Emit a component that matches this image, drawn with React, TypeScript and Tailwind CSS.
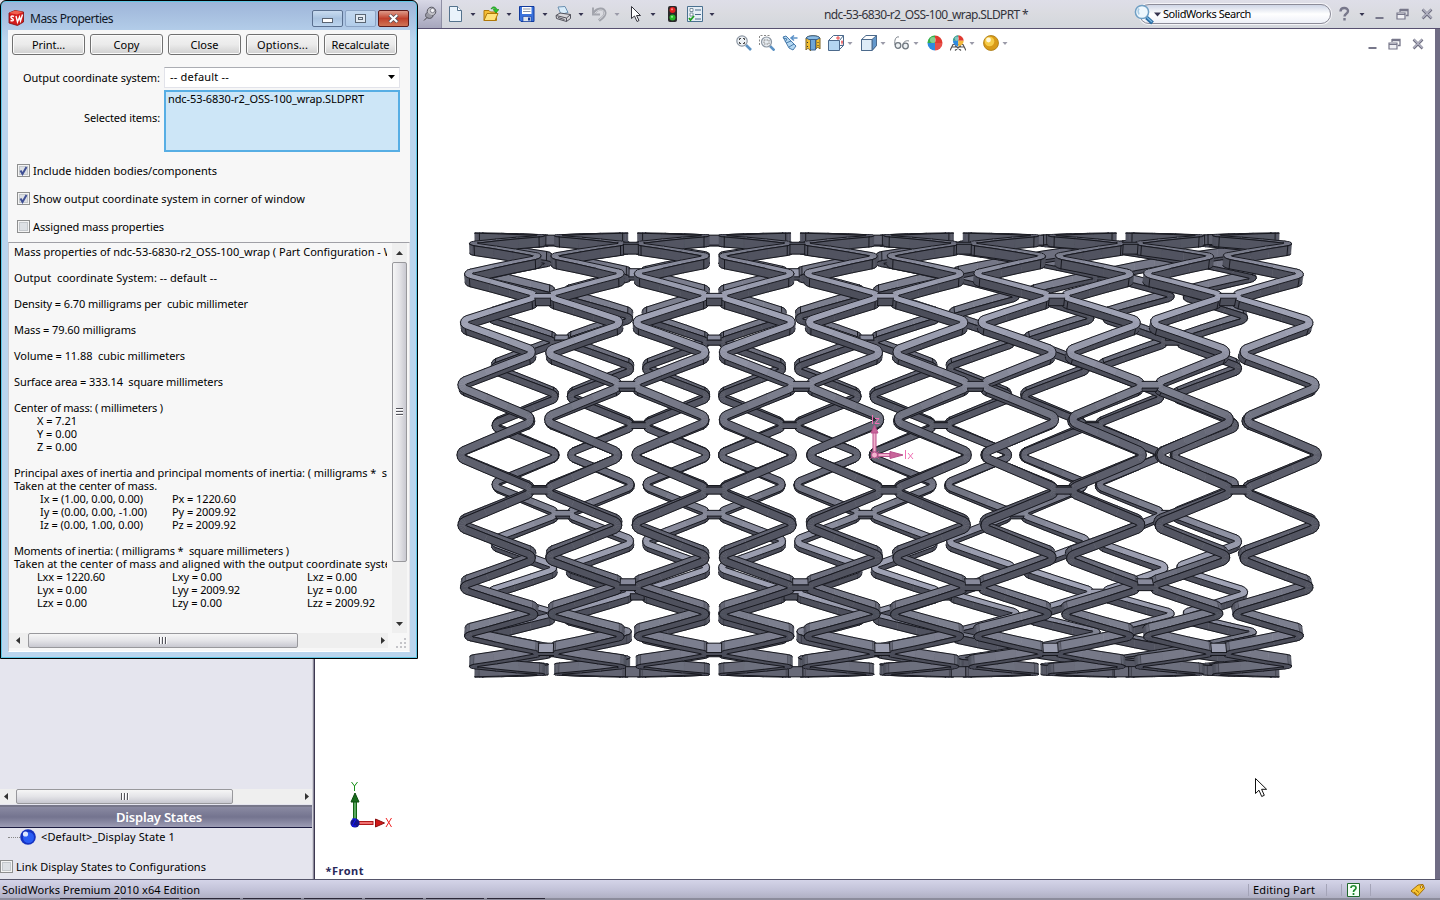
import { useLayoutEffect, useMemo, useRef, useState } from "react";
import type { ReactNode } from "react";

/* ---------- text that is spaced to a given width ---------- */
function Fit({ w, children, className = "" }: { w: number; children: string; className?: string }) {
  const ref = useRef<HTMLSpanElement>(null);
  const [ls, setLs] = useState(0);
  useLayoutEffect(() => {
    const el = ref.current;
    if (el) setLs((w - el.getBoundingClientRect().width) / children.length);
  }, [w, children]);
  return (
    <span ref={ref} className={`inline-block whitespace-pre ${className}`} style={{ letterSpacing: `${ls}px` }}>
      {children}
    </span>
  );
}

/* ---------- stent geometry ---------- */
type P2 = [number, number];
type P3 = [number, number, number];
type Face = { z: number; fill: string; d: string; e: string };

const R_OUT = 0.553;
const R_IN = 0.528;
const APEXES = 42;
const STEP = (2 * Math.PI) / APEXES;
const PITCH = 0.2023;
const HALF = 0.0095;
const FILLET = 0.0112;
const AMP = 0.0967;

const wrap = (u: number, v: number, r: number): P3 => {
  const t = v / R_OUT;
  return [u, r * Math.sin(t), r * Math.cos(t)];
};

const project = ([x, y, z]: P3): P2 => {
  const s = 1 / (0.00250015 - 0.000188 * (z / R_OUT));
  return [714 + s * (0.405 + x), 455 + s * y];
};

const mix = (t: number) => {
  const a = [76, 78, 90];
  const b = [168, 171, 190];
  return `rgb(${a.map((c, i) => Math.round(c + (b[i] - c) * t)).join(",")})`;
};

function addFace(out: Face[], q: P3[], edges: number[][], bias = 0) {
  const p = q.map(project);
  let area = 0;
  for (let i = 0; i < 4; i++) {
    const n = p[(i + 1) % 4];
    area += p[i][0] * n[1] - n[0] * p[i][1];
  }
  if (area <= 0) return;
  const a = [0, 1, 2].map((i) => q[2][i] - q[0][i]);
  const b = [0, 1, 2].map((i) => q[3][i] - q[1][i]);
  const n = [a[1] * b[2] - a[2] * b[1], a[2] * b[0] - a[0] * b[2], a[0] * b[1] - a[1] * b[0]];
  const len = Math.hypot(n[0], n[1], n[2]) || 1;
  const lit = Math.max(0, (-0.62 * n[1] + 0.785 * n[2]) / len);
  const f = (c: P2) => `${c[0].toFixed(1)} ${c[1].toFixed(1)}`;
  out.push({
    z: (q[0][2] + q[1][2] + q[2][2] + q[3][2]) / 4 + bias,
    fill: mix(0.14 * lit + 0.76 * Math.pow(lit, 8)),
    d: `M${p.map(f).join("L")}Z`,
    e: edges.map(([i, j]) => `M${f(p[i])}L${f(p[j])}`).join(""),
  });
}

function buildStent(): Face[] {
  const out: Face[] = [];
  const step = STEP * R_OUT;
  const g = Math.atan(step / (2 * AMP));
  const sweep = Math.PI / 2 - g;
  for (let ring = 0; ring < 10; ring++) {
    const c = -0.9104 + PITCH * ring;
    const pts: { a: P2; b: P2; mark: boolean }[] = [];
    for (let k = 0; k < APEXES; k++) {
      const left = (k + ring) % 2 === 0;
      const dir = left ? -1 : 1;
      const cu = c + dir * (AMP - FILLET / Math.sin(g));
      const at = (phi: number, r: number): P2 => [cu + dir * r * Math.cos(phi), k * step + r * Math.sin(phi)];
      for (let m = 0; m <= 6; m++) {
        const phi = -sweep + (2 * sweep * m) / 6;
        const o = at(phi, FILLET + HALF);
        const i = at(phi, FILLET - HALF);
        pts.push({ a: left ? o : i, b: left ? i : o, mark: m === 0 || m === 6 });
      }
    }
    const n = pts.length;
    for (let j = 0; j < n; j++) {
      const s = pts[j];
      const t0 = pts[(j + 1) % n];
      const add = j === n - 1 ? APEXES * step : 0;
      const ta: P2 = [t0.a[0], t0.a[1] + add];
      const tb: P2 = [t0.b[0], t0.b[1] + add];
      const parts = s.mark && t0.mark ? 3 : 1;
      const lerp = (p: P2, q: P2, f: number): P2 => [p[0] + (q[0] - p[0]) * f, p[1] + (q[1] - p[1]) * f];
      for (let h = 0; h < parts; h++) {
        const a0 = lerp(s.a, ta, h / parts);
        const a1 = lerp(s.a, ta, (h + 1) / parts);
        const b0 = lerp(s.b, tb, h / parts);
        const b1 = lerp(s.b, tb, (h + 1) / parts);
        const [a0o, a1o, b0o, b1o] = [a0, a1, b0, b1].map((p) => wrap(p[0], p[1], R_OUT));
        const [a0i, a1i, b0i, b1i] = [a0, a1, b0, b1].map((p) => wrap(p[0], p[1], R_IN));
        const tick = s.mark && h === 0;
        addFace(out, [a0o, b0o, b1o, a1o], [[0, 3], [1, 2]]);
        addFace(out, [a0i, a1i, b1i, b0i], [[0, 1], [2, 3]]);
        addFace(out, [a0i, a0o, a1o, a1i], tick ? [[1, 2], [0, 3], [0, 1]] : [[1, 2], [0, 3]]);
        addFace(out, [b0o, b0i, b1i, b1o], tick ? [[1, 2], [0, 3], [0, 1]] : [[1, 2], [0, 3]]);
      }
    }
    if (ring < 9) {
      const u = c + PITCH / 2;
      const hu = 0.018;
      const hv = 0.0082;
      for (let k = ring % 2 === 0 ? 1 : 4; k < APEXES; k += 6) {
        const v = k * step;
        const corner = (du: number, dv: number, r: number) => wrap(u + du, v + dv, r);
        const o = [corner(-hu, -hv, R_OUT), corner(hu, -hv, R_OUT), corner(hu, hv, R_OUT), corner(-hu, hv, R_OUT)];
        const i = [corner(-hu, -hv, R_IN), corner(hu, -hv, R_IN), corner(hu, hv, R_IN), corner(-hu, hv, R_IN)];
        addFace(out, o, [[0, 1], [2, 3]], 0.012);
        addFace(out, [i[0], i[3], i[2], i[1]], [[0, 3], [1, 2]], 0.012);
        addFace(out, [i[0], i[1], o[1], o[0]], [[0, 1], [2, 3], [0, 3], [1, 2]], 0.012);
        addFace(out, [o[3], o[2], i[2], i[3]], [[0, 1], [2, 3], [0, 3], [1, 2]], 0.012);
      }
    }
  }
  return out.sort((a, b) => a.z - b.z);
}

function Viewport() {
  const faces = useMemo(buildStent, []);
  return (
    <svg className="block h-full w-full" viewBox="315 29 1120 850">
      {faces.map((f, i) => (
        <g key={i}>
          <path d={f.d} fill={f.fill} stroke={f.fill} strokeWidth="0.6" strokeLinejoin="round" />
          <path d={f.e} stroke="#14151b" strokeWidth="0.95" fill="none" strokeLinecap="round" />
        </g>
      ))}
      {/* principal axes at the centre of mass */}
      <g stroke="#b8518c" strokeWidth="1">
        <rect x="873" y="432" width="3" height="20" fill="#f0b0cc" />
        <path d="M874.5 425l3.500 8h-7z" fill="#c8649a" />
        <rect x="878" y="453.500" width="12" height="3" fill="#f0b0cc" />
        <path d="M903 455l-13 -3.500v7z" fill="#c8649a" />
        <circle cx="874.500" cy="455" r="3" fill="#f3b4d0" />
        <path d="M870 451l2 2M879 451l-2 2M870 459l2 -2M879 459l-2 -2" />
        <g stroke="#f070b4" fill="none">
          <path d="M872.500 415v9M875 418.500h4l-4 5h4.500" />
          <path d="M905.500 450v9M908 453l5 6M913 453l-5 6" />
        </g>
      </g>
      {/* view triad */}
      <g>
        <rect x="353.500" y="800" width="3" height="20" fill="#5aa860" stroke="#146414" />
        <path d="M355 793l4 9h-8z" fill="#176b1c" stroke="#0e4a10" />
        <rect x="358" y="821.500" width="15" height="3" fill="#f07070" stroke="#b01818" />
        <path d="M384.500 823l-9 -4v8z" fill="#d01818" stroke="#8a1010" />
        <circle cx="355" cy="823" r="4.600" fill="#14148c" />
        <path d="M352 819h4l-4 7h4" fill="none" stroke="#1414ff" />
        <path d="M351.500 782l3 4v5M357.500 782l-3 4" fill="none" stroke="#189018" />
        <path d="M386 818l5.500 9M391.500 818l-5.500 9" fill="none" stroke="#f02020" />
      </g>
      <text x="325.500" y="875" fill="#28285a" fontFamily="Noto Sans, sans-serif" fontWeight="700" fontSize="11" textLength="38">
        *Front
      </text>
      {/* pointer */}
      <path d="M1255.500 778.500v15l3.500 -3.300l2.700 6.300l2.600 -1.200l-2.700 -6h5z" fill="#fff" stroke="#111" />
    </svg>
  );
}

/* ---------- small parts ---------- */
const Arrow = ({ dim = false }: { dim?: boolean }) => (
  <svg className="h-[5px] w-[6px] shrink-0" viewBox="0 0 6 5">
    <path d="M.5 1h5L3 4z" fill={dim ? "#9a9aa8" : "#35334f"} />
  </svg>
);

function Ico({ children, className = "", w = 16 }: { children: ReactNode; className?: string; w?: number }) {
  return (
    <svg className={`h-4 shrink-0 ${className}`} width={w} height="16" viewBox={`0 0 ${w} 16`}>
      {children}
    </svg>
  );
}

const Tool = ({ children, dim }: { children: ReactNode; dim?: boolean }) => (
  <div className="flex w-9 shrink-0 items-center gap-[7px]">
    <Ico>{children}</Ico>
    <Arrow dim={dim} />
  </div>
);

const WinGlyphs = ({ gap }: { gap: string }) => (
  <div className={`flex items-center ${gap}`}>
    <Ico w={10}>
      <path d="M1.500 11h8v2h-8z" fill="#77778a" />
    </Ico>
    <Ico w={13}>
      <path d="M4 3.500h8v6h-2M4 3v3M4 4.500h8" fill="none" stroke="#77778a" strokeWidth="1.300" />
      <path d="M1 7h8v6h-8zM1 8.500h8" fill="#f0f0f4" stroke="#77778a" strokeWidth="1.200" />
    </Ico>
    <Ico w={12}>
      <path d="M1.500 3.500l9 9M10.500 3.500l-9 9" stroke="#6a6a7c" strokeWidth="2.500" />
      <path d="M2 3.500l8.500 8.500M10 3.500l-8.500 8.500" stroke="#b4b4c4" strokeWidth="1.200" />
    </Ico>
  </div>
);

function Header() {
  return (
    <header className="flex h-[29px] shrink-0 items-center border-b border-[#575070] bg-linear-to-b from-[#dedee8] via-[#dadbe0] to-[#d3d6dc] pl-[418px]">
      <div className="flex h-full w-6 shrink-0 items-center justify-center border-r border-[#8f8fa4] bg-linear-to-b from-[#d8d8e6] to-[#a6a6bc]">
        <Ico w={14}>
          <circle cx="8.500" cy="5.500" r="4.300" fill="#c4c4ca" stroke="#555560" />
          <circle cx="9.500" cy="4.500" r="2.200" fill="#f4f4f8" stroke="#70707c" strokeWidth=".8" />
          <path d="M4 6.500c-2 1.500-2 4.500.5 5.500s5 0 5.500-2" fill="#9a9aa4" stroke="#555560" />
          <path d="M4 11.500L1 14.500" stroke="#444" />
        </Ico>
      </div>
      <div className="flex items-center pl-[5px]">
        <Tool>
          <path d="M2.500.5h8l4 4v11h-12z" fill="#eaf3fb" stroke="#54728c" />
          <path d="M10.500.5v4h4" fill="#fff" stroke="#54728c" />
        </Tool>
        <Tool>
          <path d="M1 14.500v-10h5l1.500 1.500h6v8.500z" fill="#f5bd35" stroke="#b07808" />
          <path d="M1 14.500l3-7h11l-3 7z" fill="#ffe27a" stroke="#b07808" />
          <path d="M8 3c1-3 5-3 6 .5h2l-3 3.500l-3-3.500h2c-.5-1.500-2-1.500-4-.5z" fill="#2cc42c" stroke="#108010" strokeWidth=".5" />
        </Tool>
        <Tool>
          <path d="M.5.500h14.500v15h-13l-1.500-1.500z" fill="#3a72dc" stroke="#123a9c" />
          <path d="M3 1h9.500v7h-9.500z" fill="#fff" />
          <path d="M4 3h7.500M4 5.500h7.500" stroke="#8a93a6" />
          <path d="M4 10.500h8v5h-8z" fill="#dfe5ee" stroke="#123a9c" strokeWidth=".6" />
          <path d="M9 11.500h2v3h-2z" fill="#123a9c" />
        </Tool>
        <Tool>
          <path d="M3 1l7-.5l3 6l-7 2z" fill="#d8ecfa" stroke="#6a8fb0" />
          <path d="M1 9.500l4-2.500l10.500 1.500v4l-4 3l-10-3z" fill="#d6d6da" stroke="#53535c" />
          <path d="M1 9.500l10.500 2.500l4-3.500M11.500 12v3.500M3 11.500l6.500 2" fill="none" stroke="#53535c" />
        </Tool>
        <Tool dim>
          <path d="M2 1.500v7h7" fill="none" stroke="#a4a6ae" strokeWidth="2" />
          <path d="M3 7C6 2 13 1.500 14 6.500c.5 4-3 5.500-6 8" fill="none" stroke="#a0a2aa" strokeWidth="3" />
          <path d="M4 7C7 3 12.500 3 13.500 6.500c.5 3-3 5-5 7" fill="none" stroke="#d8d9de" strokeWidth="1" />
        </Tool>
        <Tool>
          <path d="M4.500.5v12l3-2.500l2.500 5.500l2-1l-2.500-5h4z" fill="#fff" stroke="#33333c" />
        </Tool>
        <Ico className="ml-px">
          <rect x="4" y="0" width="9" height="16" rx="2" fill="#2a2a2a" />
          <circle cx="8.500" cy="4" r="3" fill="#e02020" />
          <circle cx="8.500" cy="11.500" r="3" fill="#28b828" />
          <circle cx="8" cy="3.300" r="1.100" fill="#ff8a80" />
          <circle cx="8" cy="10.800" r="1.100" fill="#8af08a" />
        </Ico>
        <div className="ml-[7px] flex items-center gap-[6px]">
          <Ico>
            <path d="M.5 .5h15v15h-15z" fill="#e6eef6" stroke="#4a7090" />
            <path d="M3 2.500h3v3h-3zM3 7h3v3h-3z" fill="#fff" stroke="#60788c" strokeWidth=".8" />
            <path d="M8 4h6M8 8.500h6M8 13h6" stroke="#4a6a88" strokeWidth="1.200" />
            <path d="M2 12l1.500 2L7 10" fill="none" stroke="#20a020" strokeWidth="1.800" />
          </Ico>
          <Arrow />
        </div>
      </div>
      <div className="ml-[109px] w-[206px] pt-[2px] text-xs leading-4 text-[#33333b]">
        <Fit w={204}>ndc-53-6830-r2_OSS-100_wrap.SLDPRT *</Fit>
      </div>
      <div className="relative ml-auto flex h-5 w-[192px] items-center rounded-full border border-[#8c8c98] bg-linear-to-b from-[#cfd6e6] via-white to-[#eef0f8] pl-[13px] shadow-[0_0_0_1px_#f4f4f8]">
        <svg className="absolute top-[-1px] left-[-7px] h-[21px] w-[22px]" viewBox="0 0 22 21">
          <circle cx="9" cy="8" r="6.600" fill="#eef7fd" stroke="#6f9fc4" strokeWidth="1.500" />
          <path d="M6 4.500c-1.500 2-1 4 0 6" fill="none" stroke="#a9cbe4" strokeWidth="1.500" />
          <path d="M13.500 13.500l6 5.500" stroke="#2a6da4" strokeWidth="4" />
          <path d="M14 13.500l5 4.500" stroke="#7ab8e4" strokeWidth="1.200" />
        </svg>
        <svg className="ml-px h-[5px] w-[7px]" viewBox="0 0 7 5">
          <path d="M0 .5h7L3.500 4.500z" fill="#35334f" />
        </svg>
        <Fit w={88} className="ml-[2px] text-[11px] text-black">SolidWorks Search</Fit>
      </div>
      <svg className="ml-2 h-4 w-[11px]" viewBox="0 0 11 16">
        <path d="M1.500 5.500C1.500 1 9 1 9 5c0 3-3.500 2.500-3.500 5.500M5.500 12v2.500" fill="none" stroke="#77778a" strokeWidth="2.400" />
      </svg>
      <div className="mr-[9px] ml-[9px]">
        <Arrow />
      </div>
      <div className="mr-[7px]">
        <WinGlyphs gap="gap-3" />
      </div>
    </header>
  );
}

function Ball({ c = false }: { c?: boolean }) {
  return (
    <>
      <path d="M8 8V.5A7.500 7.500 0 0 0 .5 8z" fill="#35b04a" />
      <path d="M8 8V.5A7.500 7.500 0 0 1 15.500 8z" fill="#e03a30" />
      <path d="M8 8H.5A7.500 7.500 0 0 0 8 15.500z" fill="#2f8be0" />
      <path d="M8 8h7.500A7.500 7.500 0 0 1 8 15.500z" fill={c ? "#f2b83a" : "#e8504a"} />
      <path d="M8 8V.5A7.500 7.500 0 0 0 .5 8z" fill={c ? "#2f8be0" : "#35b04a"} opacity=".5" />
      <circle cx="6" cy="5" r="3" fill="#fff" opacity=".4" />
    </>
  );
}

function HeadsUp() {
  return (
    <div className="absolute top-[6px] left-[421px] flex h-4 items-center">
      <Ico>
        <path d="M10 10l5 5" stroke="#5c92c4" strokeWidth="2.600" />
        <circle cx="6" cy="6" r="5.200" fill="#eef2f6" stroke="#8c96a2" strokeWidth="1.200" />
        <path d="M3.500 5v-1.500h1.500M7 3.500h1.500v1.500M8.500 7v1.500h-1.500M5 8.500h-1.500v-1.500" fill="none" stroke="#444" />
      </Ico>
      <Ico className="ml-[7px]">
        <path d="M.5 10V.5h11" fill="none" stroke="#888" strokeDasharray="2 1.500" />
        <path d="M11 11l4.500 4.500" stroke="#5c92c4" strokeWidth="2.600" />
        <circle cx="7.500" cy="7" r="5" fill="#e6ebf0" stroke="#8c96a2" strokeWidth="1.200" />
        <path d="M5 5h5v4h-5z" fill="none" stroke="#888" strokeDasharray="1.500 1" />
      </Ico>
      <Ico className="ml-[7px]">
        <path d="M1 2l3-1l10 10l-3 4l-4-2z" fill="#b4d8f2" stroke="#4a7cac" />
        <path d="M1 3l4 1l-2 3M4 8l5-2M7 12l5-3" fill="none" stroke="#4a7cac" />
        <path d="M15.500 3h-6M12 .5L9 3l3 2.500" fill="none" stroke="#5c92c8" strokeWidth="1.500" />
      </Ico>
      <Ico className="ml-[7px]">
        <path d="M1 3c2-3 12-3 14 0v11c-2-2-3-2-4 0v-9H5.500v11C4 13 2 13 1 15z" fill="#f0be30" stroke="#7a6020" />
        <path d="M5.500 4.500h5v10.500h-5z" fill="#6ea6d8" stroke="#3c6490" />
        <path d="M1 3c2-3 12-3 14 0l-3 1.500H4z" fill="#8abce4" stroke="#3c6490" />
        <path d="M2.500 7v1M2.500 11v1M13 7v1M13 10v1" stroke="#333" />
      </Ico>
      <Ico className="ml-[7px]">
        <path d="M5.500 .5h10v10h-4M15.500.5l-4 5M5.500.5l-5 5M15.500 10.500l-4 4" fill="none" stroke="#4c6a8c" />
        <path d="M.5 5.500h11v10h-11z" fill="#b4d6f2" stroke="#4c6a8c" />
        <path d="M8 3h4M10 1v4M13 7h2M14 5.500v4" stroke="#e84848" />
      </Ico>
      <div className="mr-[8px] ml-[3px]">
        <Arrow dim />
      </div>
      <Ico>
        <path d="M.5 4.500L5 .5h10.500v10l-4.500 5H.5z" fill="#fff" stroke="#4c6a8c" />
        <path d="M11 4.500L15.500.5v10l-4.500 5z" fill="#6398cc" stroke="#4c6a8c" />
        <path d="M.5 4.500h10.500v11H.5z" fill="#deecf8" stroke="#4c6a8c" />
      </Ico>
      <div className="mr-[8px] ml-[3px]">
        <Arrow dim />
      </div>
      <Ico>
        <path d="M1 10C0 5 2 1 5 2M9 10c0-3 3-5 6-4" fill="none" stroke="#80868e" />
        <circle cx="4" cy="10.500" r="2.800" fill="#eef2f4" stroke="#707880" strokeWidth="1.300" />
        <circle cx="11.500" cy="11" r="2.800" fill="#eef2f4" stroke="#707880" strokeWidth="1.300" />
      </Ico>
      <div className="mr-[8px] ml-[3px]">
        <Arrow dim />
      </div>
      <Ico>
        <Ball />
      </Ico>
      <Ico className="ml-[7px]">
        <path d="M0 15.500L3 9.500h10l3 6M2 12h12M5 15.500l6-5M11 15.500l-6-5" fill="none" stroke="#555" strokeWidth="1.200" />
        <g transform="translate(2.500 0) scale(.72)">
          <Ball c />
        </g>
      </Ico>
      <div className="mr-[8px] ml-[3px]">
        <Arrow dim />
      </div>
      <Ico>
        <circle cx="8" cy="8" r="7.500" fill="#d89a18" stroke="#a87810" strokeWidth=".8" />
        <circle cx="6.500" cy="6.500" r="4.800" fill="#f6cc48" />
        <circle cx="5.500" cy="5" r="2.400" fill="#fff8dc" />
      </Ico>
      <div className="ml-[3px]">
        <Arrow dim />
      </div>
    </div>
  );
}

const Check = ({ on = false }: { on?: boolean }) => (
  <svg className="h-[13px] w-[13px] shrink-0" viewBox="0 0 13 13">
    <rect x=".5" y=".5" width="12" height="12" fill="#f4f4f4" stroke="#8e8f8f" />
    <rect x="2.500" y="2.500" width="8" height="8" fill="#dde0e4" stroke="#c4c8cc" />
    {on && <path d="M3.500 6.500l2 3.500L9.500 3" fill="none" stroke="#3f4f94" strokeWidth="2" />}
  </svg>
);

function HScroll({ thumb, lead }: { thumb: string; lead: string }) {
  return (
    <div className="flex h-[15px] items-center bg-[#efefef]">
      <svg className={`h-[7px] shrink-0 ${lead}`} viewBox="0 0 4 7" preserveAspectRatio="xMinYMid">
        <path d="M4 0v7L0 3.500z" fill="#333" />
      </svg>
      <div
        className={`flex h-[15px] items-center justify-center gap-px rounded-[2px] border border-[#98989c] bg-linear-to-b from-[#f6f6f6] via-[#e4e4e8] to-[#c8c8d0] ${thumb}`}
      >
        {[0, 1, 2].map((i) => (
          <i key={i} className="h-[7px] w-[2px] border-r border-white bg-[#55555c]" />
        ))}
      </div>
      <svg className="mr-[3px] ml-auto h-[7px] w-1 shrink-0" viewBox="0 0 4 7">
        <path d="M0 0v7l4-3.500z" fill="#333" />
      </svg>
    </div>
  );
}

function LeftPanel() {
  return (
    <aside className="flex w-[312px] shrink-0 flex-col bg-[#e5e5ee]">
      <div className="mt-[760px]">
        <HScroll thumb="ml-[6px] w-[217px]" lead="ml-1 w-[6px]" />
      </div>
      <div className="mt-px flex h-[23px] items-center justify-center border-t-2 border-b border-t-[#77778a] border-b-[#1c1c40] bg-linear-to-b from-[#8a8aa2] via-[#74748f] to-[#9c9cb4] pl-[6px] text-[13px] font-semibold text-white">
        <Fit w={86}>Display States</Fit>
      </div>
      <div className="flex h-[18px] items-center pl-2">
        <span className="w-3 border-t border-dotted border-[#888]" />
        <svg className="h-4 w-4" viewBox="0 0 16 16">
          <circle cx="8" cy="8" r="7.800" fill="#1432c0" />
          <circle cx="8.500" cy="8.500" r="5.500" fill="#2a5cf4" />
          <circle cx="5.500" cy="5" r="2.600" fill="#dce8ff" />
        </svg>
        <Fit w={134} className="ml-[5px] text-[11px]">{"<Default>_Display State 1"}</Fit>
      </div>
      <div className="mt-[14px] flex h-[13px] items-center gap-[3px]">
        <Check />
        <Fit w={190} className="text-[11px]">Link Display States to Configurations</Fit>
      </div>
    </aside>
  );
}

/* ---------- Mass Properties dialog ---------- */
type Cell = [string, number, string];
const report: Cell[][] = [
  [["Mass properties of ndc-53-6830-r2_OSS-100_wrap ( Part Configuration - W", 380, "ml-0"]],
  [],
  [["Output  coordinate System: -- default --", 203, "ml-0"]],
  [],
  [["Density = 6.70 milligrams per  cubic millimeter", 234, "ml-0"]],
  [],
  [["Mass = 79.60 milligrams", 122, "ml-0"]],
  [],
  [["Volume = 11.88  cubic millimeters", 171, "ml-0"]],
  [],
  [["Surface area = 333.14  square millimeters", 209, "ml-0"]],
  [],
  [["Center of mass: ( millimeters )", 149, "ml-0"]],
  [["X = 7.21", 40, "ml-[23px]"]],
  [["Y = 0.00", 40, "ml-[23px]"]],
  [["Z = 0.00", 40, "ml-[23px]"]],
  [],
  [["Principal axes of inertia and principal moments of inertia: ( milligrams *  s", 373, "ml-0"]],
  [["Taken at the center of mass.", 143, "ml-0"]],
  [["Ix = (1.00, 0.00, 0.00)", 103, "ml-[26px]"], ["Px = 1220.60", 64, "ml-[29px]"]],
  [["Iy = (0.00, 0.00, -1.00)", 107, "ml-[26px]"], ["Py = 2009.92", 64, "ml-[25px]"]],
  [["Iz = (0.00, 1.00, 0.00)", 103, "ml-[26px]"], ["Pz = 2009.92", 64, "ml-[29px]"]],
  [],
  [["Moments of inertia: ( milligrams *  square millimeters )", 275, "ml-0"]],
  [["Taken at the center of mass and aligned with the output coordinate syste", 377, "ml-0"]],
  [["Lxx = 1220.60", 68, "ml-[23px]"], ["Lxy = 0.00", 50, "ml-[67px]"], ["Lxz = 0.00", 50, "ml-[85px]"]],
  [["Lyx = 0.00", 50, "ml-[23px]"], ["Lyy = 2009.92", 68, "ml-[85px]"], ["Lyz = 0.00", 50, "ml-[67px]"]],
  [["Lzx = 0.00", 50, "ml-[23px]"], ["Lzy = 0.00", 50, "ml-[85px]"], ["Lzz = 2009.92", 68, "ml-[85px]"]],
];

const buttons: [string, number][] = [
  ["Print...", 33],
  ["Copy", 26],
  ["Close", 28],
  ["Options...", 51],
  ["Recalculate", 58],
];

function Dialog() {
  return (
    <section className="absolute top-0 left-0 flex h-[659px] w-[418px] flex-col rounded-t-[6px] border border-black bg-linear-to-b from-[#9db4d8] via-[#bad5ee] via-[6%] to-[#bad5ee] px-[7px] pb-[6px] shadow-[inset_0_0_0_1px_#5fc6e4]">
      <div className="flex h-[29px] shrink-0 items-start pt-[9px]">
        <svg className="h-4 w-4" viewBox="0 0 16 16">
          <path d="M1 3l6-2.500l8.500 1.500v10l-6 3.500L1 13z" fill="#d41c1c" stroke="#7c0c0c" strokeWidth=".8" />
          <path d="M1 3l8 1.500l6.500-2.500L7 .5z" fill="#f06050" />
          <path d="M6 6.500c-3-1.500-4 1-2 2s2 3-1.500 2" fill="none" stroke="#fff" strokeWidth="1.400" />
          <path d="M8 6l1.500 6l2-5l1 4l2-6.500" fill="none" stroke="#fff" strokeWidth="1.400" />
        </svg>
        <Fit w={83} className="ml-[6px] text-xs leading-[18px] text-[#101828]">Mass Properties</Fit>
        <div className="ml-auto flex gap-[2px] pr-px">
          <div className="flex h-[17px] w-[31px] items-center justify-center rounded-[2px] border border-[#5a7090] bg-linear-to-b from-[#c9dcf0] via-[#a9c3e0] to-[#bdd5ee]">
            <span className="mt-1 h-[5px] w-[11px] border border-[#5a6472] bg-white" />
          </div>
          <div className="flex h-[17px] w-[31px] items-center justify-center rounded-[2px] border border-[#8ba3c4] bg-linear-to-b from-[#c3d8ef] to-[#b2cdea]">
            <span className="flex h-[9px] w-[11px] items-center justify-center border border-[#5a6674] bg-[#e2eaf2]">
              <i className="h-[3px] w-[5px] border border-[#5a6674]" />
            </span>
          </div>
          <div className="flex h-[17px] w-[31px] items-center justify-center rounded-[2px] border border-[#5c1a1a] bg-linear-to-b from-[#dd9a8a] via-[#c0402c] to-[#cf7456]">
            <svg className="h-[9px] w-[11px]" viewBox="0 0 11 9">
              <path d="M1.500 1l8 7M9.500 1l-8 7" stroke="#4c4c58" strokeWidth="3.600" />
              <path d="M1.800 1l7.400 7M9.200 1l-7.400 7" stroke="#fff" strokeWidth="2.200" />
            </svg>
          </div>
        </div>
      </div>
      <div className="flex min-h-0 flex-1 flex-col bg-[#f7f7f7]">
        <div className="flex gap-[5px] pt-1 pl-1">
          {buttons.map(([t, w]) => (
            <button
              key={t}
              className="flex h-[21px] w-[73px] items-center justify-center rounded-[3px] border border-[#707070] bg-linear-to-b from-[#f3f3f3] via-[#ebebeb] to-[#d0d0d0] shadow-[inset_0_0_0_1px_#fbfbfb]"
            >
              <Fit w={w}>{t}</Fit>
            </button>
          ))}
        </div>
        <div className="mt-[12px] flex items-center">
          <div className="w-[152px] pt-px text-right">
            <Fit w={137}>Output coordinate system:</Fit>
          </div>
          <div className="ml-1 flex h-[21px] w-[236px] items-center border border-[#e2e3ea] border-t-[#abadb3] bg-white pr-1 pb-px pl-[5px]">
            <Fit w={59}>-- default --</Fit>
            <svg className="ml-auto h-1 w-[7px]" viewBox="0 0 7 4">
              <path d="M0 0h7L3.500 4z" fill="#000" />
            </svg>
          </div>
        </div>
        <div className="mt-[2px] flex">
          <div className="w-[152px] pt-[20px] text-right">
            <Fit w={76}>Selected items:</Fit>
          </div>
          <div className="ml-1 h-[62px] w-[236px] border-2 border-[#57aee4] bg-[#cde6f7] pl-[2px] leading-[14px]">
            <Fit w={196}>ndc-53-6830-r2_OSS-100_wrap.SLDPRT</Fit>
          </div>
        </div>
        <div className="mt-[12px] flex flex-col gap-[15px] pl-[9px]">
          <label className="flex h-[13px] items-center gap-[3px]">
            <Check on />
            <Fit w={184}>Include hidden bodies/components</Fit>
          </label>
          <label className="flex h-[13px] items-center gap-[3px]">
            <Check on />
            <Fit w={272}>Show output coordinate system in corner of window</Fit>
          </label>
          <label className="flex h-[13px] items-center gap-[3px]">
            <Check />
            <Fit w={131}>Assigned mass properties</Fit>
          </label>
        </div>
        <div className="mt-[9px] flex min-h-0 flex-1 flex-col border border-t-[#a0a0a6] border-r-[#e4e4e8] border-b-white border-l-[#c8c8d0]">
          <div className="flex min-h-0 flex-1">
            <div className="w-[378px] overflow-hidden pt-[2px] pl-[5px]">
              {report.map((row, i) => (
                <div key={i} className="flex h-[13px] items-center whitespace-pre leading-[13px]">
                  {row.map(([t, w, m], j) => (
                    <Fit key={j} w={w} className={`shrink-0 ${m}`}>{t}</Fit>
                  ))}
                </div>
              ))}
            </div>
            <div className="ml-[5px] flex w-[15px] flex-col items-center bg-[#efefef]">
              <svg className="mt-2 h-1 w-[7px]" viewBox="0 0 7 4">
                <path d="M0 4h7L3.500 0z" fill="#333" />
              </svg>
              <div className="mt-[7px] flex h-[300px] w-[15px] flex-col items-center justify-center gap-px rounded-[2px] border border-[#98989c] bg-linear-to-r from-[#f6f6f6] via-[#e4e4e8] to-[#c8c8d0]">
                {[0, 1, 2].map((i) => (
                  <i key={i} className="h-[2px] w-[7px] border-b border-white bg-[#55555c]" />
                ))}
              </div>
              <svg className="mt-auto mb-[7px] h-1 w-[7px]" viewBox="0 0 7 4">
                <path d="M0 0h7L3.500 4z" fill="#333" />
              </svg>
            </div>
          </div>
          <div className="mb-[3px] flex">
            <div className="w-[379px]">
              <HScroll thumb="ml-[6px] w-[270px]" lead="ml-[7px] w-[6px]" />
            </div>
            <svg className="ml-[8px] h-[15px] w-[11px]" viewBox="0 0 11 15">
              <path d="M8 5h2v2h-2zM8 9h2v2h-2zM8 13h2v2h-2zM4 9h2v2h-2zM4 13h2v2h-2zM0 13h2v2h-2z" fill="#c4c4c8" />
            </svg>
          </div>
        </div>
      </div>
    </section>
  );
}

function StatusBar() {
  return (
    <footer className="h-[21px] shrink-0 border-t border-[#55556a] bg-[#3c3c50]">
      <div className="flex h-[18px] items-center bg-linear-to-b from-[#d4d4e8] via-[#c4c4da] to-[#b0b0c4] pt-px pl-[2px]">
        <Fit w={198} className="text-[11px]">SolidWorks Premium 2010 x64 Edition</Fit>
        <span className="ml-auto h-3 w-px bg-[#a4a4b8]" />
        <Fit w={62} className="ml-1 text-[11px]">Editing Part</Fit>
        <span className="ml-[11px] h-3 w-px bg-[#a4a4b8]" />
        <span className="ml-[14px] h-3 w-px bg-[#a4a4b8]" />
        <svg className="ml-[5px] h-[14px] w-[13px]" viewBox="0 0 13 14">
          <path d="M.5.500h12v13H.5z" fill="#f4fff4" stroke="#20682c" />
          <path d="M4 5c0-3 5-3 5 0c0 2-2.500 1.500-2.500 4M6.500 10v2" fill="none" stroke="#1c8a2c" strokeWidth="1.700" />
        </svg>
        <span className="ml-[10px] h-3 w-px bg-[#a4a4b8]" />
        <svg className="mr-[15px] ml-[39px] h-[14px] w-[15px]" viewBox="0 0 15 14">
          <path d="M1 8l7-6l5-.5l1.500 4l-7 7.500z" fill="#f8c430" stroke="#a06c08" />
          <path d="M4 9l3 2.500M6 7l3 2.500" stroke="#a06c08" />
          <circle cx="11.500" cy="4" r="1.200" fill="#fff" stroke="#a06c08" />
        </svg>
      </div>
      <div className="flex h-[2px] gap-[3px] bg-[#8c8c9c] pl-[60px]">
        {[0, 1, 2, 3, 4, 5, 6, 7].map((i) => (
          <i key={i} className="h-px w-[58px] bg-[#2c2838]" />
        ))}
      </div>
    </footer>
  );
}

export default function App() {
  return (
    <div className="relative flex h-[900px] w-[1440px] flex-col overflow-hidden bg-white font-['Noto_Sans','Open_Sans',sans-serif] text-[11px] leading-4 text-black">
      <Header />
      <main className="flex min-h-0 flex-1">
        <LeftPanel />
        <div className="w-[3px] shrink-0 border-r border-l border-r-[#3c3850] border-l-[#d0d0d8] bg-[#8c8a9c]" />
        <div className="relative min-w-0 flex-1 bg-white">
          <Viewport />
          <HeadsUp />
          <div className="absolute top-[7px] right-[11px]">
            <WinGlyphs gap="gap-[11px]" />
          </div>
        </div>
        <div className="w-[5px] shrink-0 bg-[#706c84]" />
      </main>
      <StatusBar />
      <Dialog />
    </div>
  );
}
